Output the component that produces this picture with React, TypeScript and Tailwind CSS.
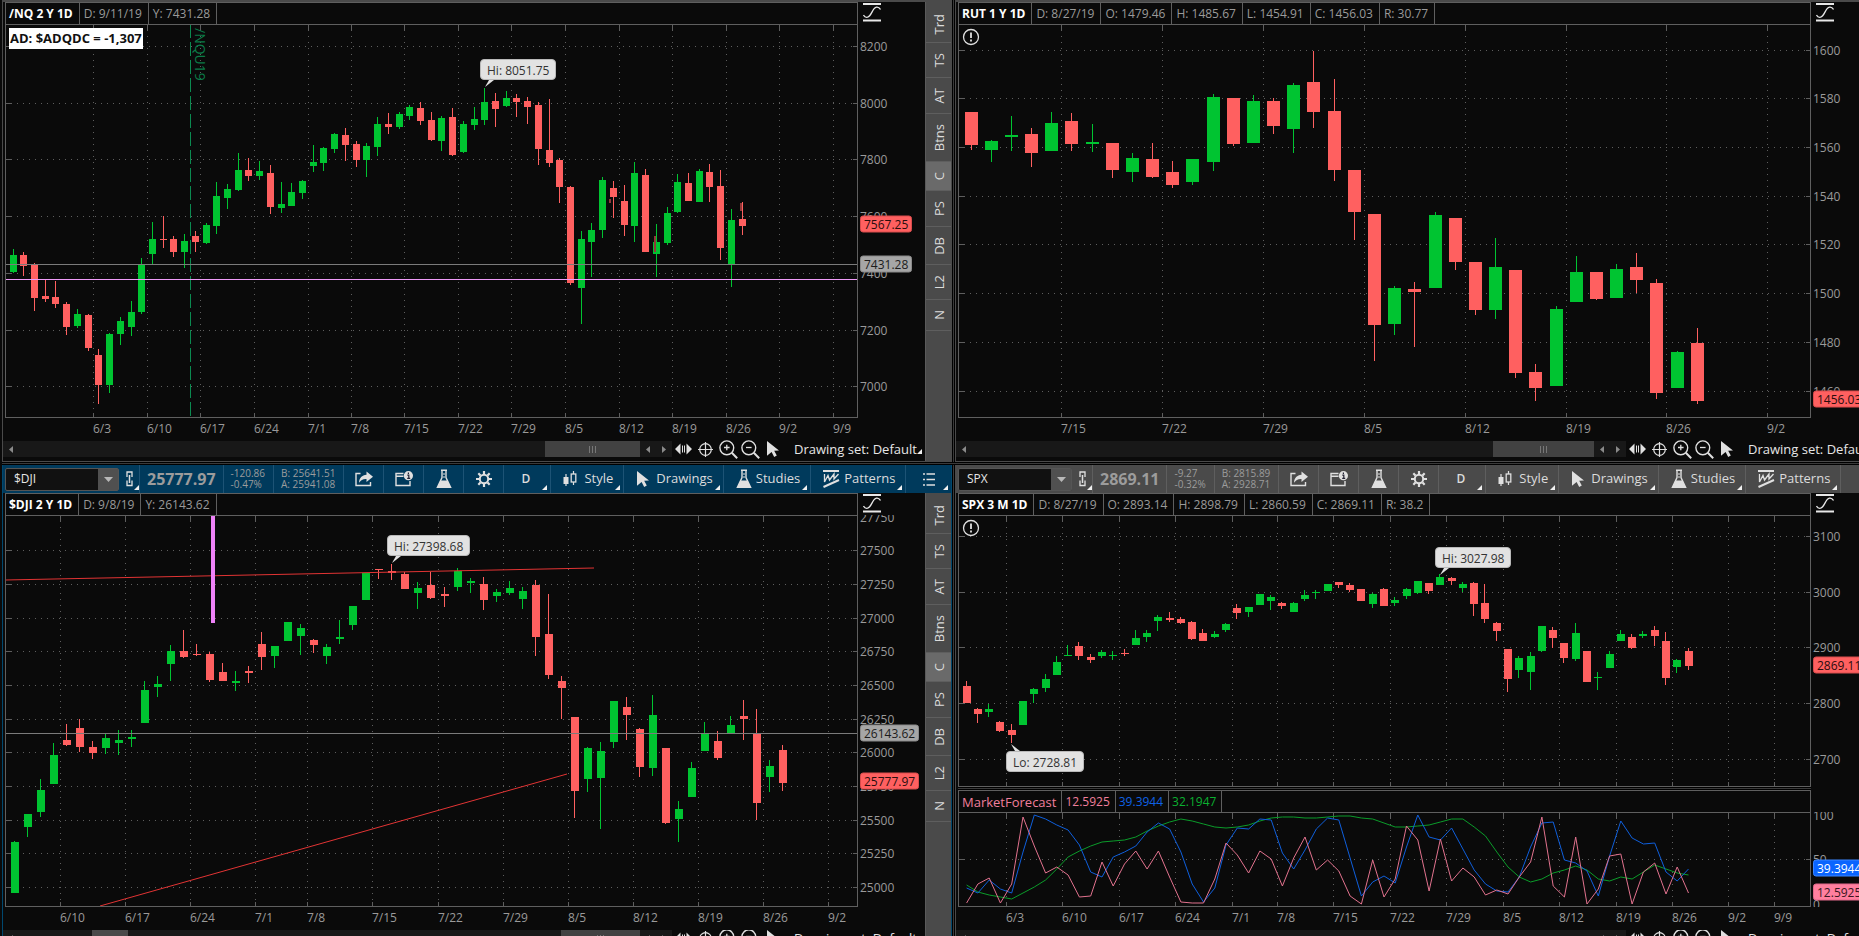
import type { ReactNode } from "react"
import clsx from "clsx"

// direction, high, body top, body bottom, low (chart rows)
type Candle = ["u" | "d", number, number, number, number]
type Tick = [number, string]

interface Series {
  start: number
  step: number
  offset: number
  body: number
  candles: Candle[]
}

const CHART_WIDTH = 853

const nq: Series = {
  start: 8.1,
  step: 10.72,
  offset: 3,
  body: 7,
  candles: [
    ["u", 249, 255, 272, 273], ["d", 252, 255, 266, 276], ["d", 263, 264, 298, 311], ["d", 279, 296, 299, 302],
    ["d", 281, 297, 304, 308], ["d", 302, 304, 327, 335], ["u", 309, 314, 326, 328], ["d", 314, 315, 348, 351],
    ["d", 349, 355, 385, 404], ["u", 333, 334, 385, 393], ["u", 317, 321, 334, 345], ["u", 301, 312, 327, 336],
    ["u", 258, 265, 312, 314], ["u", 222, 239, 254, 264], ["d", 216, 239, 240, 248], ["d", 236, 239, 252, 257],
    ["u", 234, 241, 252, 268], ["d", 231, 236, 242, 252], ["u", 223, 225, 243, 244], ["u", 182, 196, 226, 234],
    ["u", 184, 189, 198, 209], ["u", 153, 170, 190, 191], ["d", 158, 170, 176, 181], ["u", 161, 171, 176, 180],
    ["d", 165, 173, 207, 214], ["u", 182, 204, 208, 213], ["u", 183, 192, 206, 206], ["u", 180, 181, 193, 199],
    ["u", 145, 162, 166, 172], ["u", 147, 148, 163, 171], ["u", 133, 134, 149, 153], ["d", 128, 135, 145, 161],
    ["d", 141, 144, 160, 167], ["u", 143, 146, 160, 177], ["u", 117, 124, 147, 156], ["d", 113, 124, 127, 134],
    ["u", 112, 114, 127, 129], ["u", 105, 107, 116, 120], ["d", 102, 108, 121, 125], ["d", 112, 120, 140, 141],
    ["u", 116, 118, 141, 151], ["d", 108, 117, 155, 156], ["u", 121, 124, 152, 153], ["u", 107, 119, 125, 130],
    ["u", 88, 102, 120, 125], ["d", 93, 101, 109, 127], ["u", 91, 98, 106, 107], ["d", 94, 98, 102, 117],
    ["d", 97, 101, 107, 124], ["d", 102, 105, 149, 165], ["d", 99, 150, 163, 167], ["d", 158, 160, 187, 203],
    ["d", 186, 187, 283, 285], ["u", 231, 239, 288, 324], ["u", 223, 230, 242, 277], ["u", 177, 180, 230, 238],
    ["d", 181, 188, 197, 218], ["d", 185, 201, 225, 236], ["u", 162, 173, 226, 242], ["d", 169, 175, 252, 252],
    ["u", 224, 242, 254, 277], ["u", 207, 213, 243, 245], ["u", 174, 182, 212, 213], ["d", 173, 183, 201, 201],
    ["u", 169, 171, 202, 202], ["d", 164, 172, 187, 202], ["d", 170, 186, 248, 260], ["u", 209, 220, 264, 287],
    ["d", 202, 219, 226, 235],
  ],
}

const rut: Series = {
  start: 13.1,
  step: 20.17,
  offset: 6,
  body: 13,
  candles: [
    ["d", 112, 112, 145, 150], ["u", 140, 141, 150, 162], ["u", 116, 135, 137, 151], ["d", 128, 134, 153, 167],
    ["u", 112, 123, 151, 151], ["d", 113, 121, 144, 151], ["u", 124, 142, 144, 152], ["d", 143, 143, 170, 178],
    ["u", 153, 158, 172, 182], ["d", 143, 159, 177, 178], ["d", 161, 172, 185, 188], ["u", 159, 159, 182, 185],
    ["u", 94, 97, 162, 171], ["d", 98, 98, 144, 146], ["u", 95, 101, 143, 143], ["d", 98, 101, 126, 134],
    ["u", 83, 85, 129, 153], ["d", 51, 82, 112, 128], ["d", 79, 111, 170, 181], ["d", 170, 170, 212, 240],
    ["d", 214, 214, 325, 361], ["u", 286, 288, 324, 335], ["d", 282, 289, 292, 347], ["u", 212, 215, 288, 288],
    ["d", 218, 218, 262, 270], ["d", 262, 262, 310, 315], ["u", 238, 267, 310, 319], ["d", 270, 270, 373, 378],
    ["d", 364, 372, 388, 401], ["u", 306, 309, 386, 386], ["u", 256, 272, 302, 302], ["d", 272, 272, 299, 300],
    ["u", 264, 269, 298, 298], ["d", 253, 267, 280, 293], ["d", 279, 283, 393, 399], ["u", 351, 352, 388, 388],
    ["d", 328, 343, 401, 404],
  ],
}

const dji: Series = {
  start: 9.45,
  step: 13.017,
  offset: 3,
  body: 8,
  candles: [
    ["u", 841, 842, 893, 893], ["u", 814, 814, 827, 837], ["u", 779, 790, 812, 817], ["u", 743, 755, 784, 784],
    ["d", 724, 740, 745, 746], ["d", 719, 728, 747, 752], ["d", 741, 747, 753, 759], ["u", 733, 738, 748, 754],
    ["u", 730, 740, 743, 755], ["u", 730, 737, 739, 747], ["u", 681, 690, 723, 723], ["u", 676, 684, 687, 697],
    ["u", 645, 651, 664, 681], ["d", 630, 651, 657, 658], ["d", 644, 654, 655, 656], ["d", 652, 654, 680, 682],
    ["d", 663, 672, 681, 681], ["u", 671, 681, 683, 691], ["d", 666, 671, 673, 683], ["d", 632, 644, 657, 670],
    ["u", 646, 646, 656, 668], ["u", 622, 622, 641, 641], ["u", 624, 628, 636, 655], ["d", 639, 640, 645, 653],
    ["u", 644, 647, 656, 664], ["u", 620, 637, 639, 644], ["u", 606, 606, 625, 630], ["u", 573, 573, 600, 600],
    ["d", 569, 569, 570, 579], ["d", 564, 571, 573, 580], ["d", 572, 574, 589, 589], ["u", 582, 588, 593, 609],
    ["d", 572, 585, 598, 599], ["d", 587, 594, 596, 607], ["u", 568, 571, 587, 591], ["u", 578, 581, 583, 593],
    ["d", 577, 584, 600, 610], ["u", 589, 592, 596, 602], ["u", 581, 588, 593, 595], ["u", 587, 591, 599, 609],
    ["d", 580, 585, 637, 656], ["d", 594, 634, 675, 679], ["d", 676, 681, 688, 719], ["d", 717, 717, 791, 818],
    ["u", 747, 748, 779, 792], ["u", 742, 751, 778, 829], ["u", 701, 701, 742, 748], ["d", 697, 707, 715, 740],
    ["d", 728, 729, 767, 777], ["u", 695, 715, 768, 776], ["d", 748, 748, 823, 824], ["u", 801, 809, 819, 842],
    ["u", 762, 768, 797, 797], ["u", 722, 734, 751, 751], ["d", 731, 741, 758, 760], ["u", 716, 725, 734, 734],
    ["d", 700, 716, 719, 740], ["d", 709, 734, 803, 820], ["u", 760, 766, 777, 792], ["d", 745, 750, 783, 791],
  ],
}

const spx: Series = {
  start: 8.1,
  step: 11.28,
  offset: 3,
  body: 8,
  candles: [
    ["d", 681, 686, 703, 703], ["d", 708, 709, 714, 723], ["u", 704, 709, 712, 717], ["d", 721, 722, 731, 732],
    ["d", 724, 730, 735, 743], ["u", 701, 701, 725, 725], ["u", 688, 689, 694, 703], ["u", 674, 679, 688, 692],
    ["u", 656, 662, 675, 675], ["u", 645, 655, 656, 656], ["d", 642, 646, 656, 660], ["d", 654, 657, 660, 663],
    ["u", 650, 652, 656, 658], ["u", 651, 655, 656, 660], ["d", 649, 653, 654, 656], ["u", 630, 638, 645, 645],
    ["u", 630, 633, 637, 642], ["u", 615, 617, 621, 631], ["d", 612, 618, 620, 622], ["d", 617, 619, 623, 624],
    ["d", 621, 622, 639, 640], ["d", 629, 633, 641, 641], ["u", 631, 634, 637, 638], ["u", 623, 624, 630, 632],
    ["d", 604, 608, 613, 619], ["u", 607, 607, 612, 617], ["u", 594, 594, 605, 605], ["u", 595, 597, 601, 610],
    ["d", 602, 603, 606, 609], ["u", 602, 603, 612, 612], ["u", 590, 595, 599, 601], ["u", 590, 592, 593, 599],
    ["u", 584, 584, 591, 591], ["d", 582, 582, 585, 588], ["d", 583, 585, 590, 592], ["d", 589, 589, 601, 601],
    ["u", 593, 594, 604, 608], ["d", 588, 589, 606, 606], ["u", 597, 600, 603, 606], ["u", 588, 589, 596, 599],
    ["u", 581, 581, 593, 594], ["d", 583, 583, 591, 594], ["u", 574, 577, 585, 585], ["d", 577, 578, 581, 585],
    ["u", 582, 584, 588, 592], ["d", 582, 583, 604, 616], ["d", 584, 603, 619, 623], ["d", 622, 623, 631, 641],
    ["d", 649, 649, 679, 692], ["u", 656, 658, 670, 678], ["u", 652, 656, 672, 690], ["u", 626, 626, 651, 652],
    ["d", 627, 630, 638, 648], ["d", 643, 643, 658, 663], ["u", 623, 633, 659, 661], ["d", 651, 651, 682, 682],
    ["u", 672, 677, 678, 690], ["u", 651, 654, 668, 668], ["u", 630, 634, 641, 641], ["d", 634, 637, 648, 649],
    ["u", 631, 634, 636, 638], ["d", 626, 630, 636, 646], ["d", 632, 641, 678, 685], ["u", 659, 660, 667, 673],
    ["d", 648, 651, 666, 670],
  ],
}

const momentum = [
  903, 884, 878, 903, 884, 817, 846, 873, 867, 875, 897, 896, 862, 886, 864, 851, 869, 851, 877, 902, 903, 903,
  879, 843, 855, 873, 851, 859, 886, 858, 837, 870, 860, 871, 896, 904, 860, 897, 879, 826, 840, 891, 839, 881,
  868, 877, 895, 890, 894, 877, 862, 817, 886, 897, 837, 904, 889, 856, 854, 904, 872, 863, 894, 867, 893,
]
const nearTerm = [
  888, 893, 880, 889, 893, 852, 815, 819, 825, 830, 845, 872, 877, 857, 852, 846, 832, 823, 829, 852, 884, 902,
  888, 845, 828, 829, 819, 820, 853, 869, 850, 829, 818, 820, 858, 896, 882, 876, 883, 847, 815, 837, 840, 828,
  849, 870, 884, 891, 892, 877, 847, 823, 822, 860, 863, 871, 896, 856, 821, 838, 844, 843, 872, 881, 869,
]
const intermediate = [
  885, 892, 895, 897, 899, 893, 887, 880, 869, 857, 851, 846, 842, 841, 840, 837, 831, 826, 822, 819, 821, 824,
  827, 828, 827, 825, 821, 818, 817, 817, 818, 818, 817, 816, 816, 818, 819, 823, 827, 827, 826, 825, 822, 819,
  819, 827, 836, 852, 867, 877, 882, 879, 873, 870, 866, 870, 879, 881, 877, 879, 872, 865, 869, 873, 875,
]

const nqDates: Tick[] = [
  [88, "6/3"], [142, "6/10"], [195, "6/17"], [249, "6/24"], [303, "7/1"], [346, "7/8"], [399, "7/15"], [453, "7/22"],
  [506, "7/29"], [560, "8/5"], [614, "8/12"], [667, "8/19"], [721, "8/26"], [774, "9/2"], [828, "9/9"],
]
const rutDates: Tick[] = [
  [103, "7/15"], [204, "7/22"], [305, "7/29"], [406, "8/5"], [507, "8/12"], [608, "8/19"], [708, "8/26"], [809, "9/2"],
]
const djiDates: Tick[] = [
  [55, "6/10"], [120, "6/17"], [185, "6/24"], [250, "7/1"], [302, "7/8"], [367, "7/15"], [433, "7/22"],
  [498, "7/29"], [563, "8/5"], [628, "8/12"], [693, "8/19"], [758, "8/26"], [823, "9/2"],
]
const spxDates: Tick[] = [
  [48, "6/3"], [104, "6/10"], [161, "6/17"], [217, "6/24"], [274, "7/1"], [319, "7/8"], [375, "7/15"], [432, "7/22"],
  [488, "7/29"], [545, "8/5"], [601, "8/12"], [658, "8/19"], [714, "8/26"], [770, "9/2"], [816, "9/9"],
]

const nqPrices: Tick[] = [
  [46, "8200"], [103, "8000"], [159, "7800"], [216, "7600"], [273, "7400"], [330, "7200"], [386, "7000"],
]
const rutPrices: Tick[] = [
  [50, "1600"], [98, "1580"], [147, "1560"], [196, "1540"], [244, "1520"], [293, "1500"], [342, "1480"], [391, "1460"],
]
const djiPrices: Tick[] = [
  [517, "27750"], [550, "27500"], [584, "27250"], [618, "27000"], [651, "26750"], [685, "26500"], [719, "26250"],
  [752, "26000"], [786, "25750"], [820, "25500"], [853, "25250"], [887, "25000"],
]
const spxPrices: Tick[] = [
  [536, "3100"], [592, "3000"], [647, "2900"], [703, "2800"], [759, "2700"],
]
const studyLevels: Tick[] = [
  [815, "100"], [859, "50"], [904, "0"],
]

/* ---------- icons ---------- */

function CursorIcon() {
  return (
    <svg width="14" height="17" viewBox="0 0 14 17" fill="#e0e0e0" aria-hidden="true">
      <path d="M1 0 L13 9.5 L8.2 9.8 L10.8 14.6 L8.2 16 L5.6 11.1 L1 14.8 Z" />
    </svg>
  )
}

function FlaskIcon() {
  return (
    <svg width="16" height="20" viewBox="0 0 16 20" aria-hidden="true">
      <path d="M5 1.2h6M6 1.5v7L1.4 18.4h13.2L10 8.500v-7" fill="none" stroke="#e0e0e0" strokeWidth="1.4" />
      <path d="M4.500 11.500h7l3.300 7.200H1.200z" fill="#e0e0e0" />
      <path d="M7 5h2M7 8h2" stroke="#e0e0e0" />
    </svg>
  )
}

function ShareIcon() {
  return (
    <svg width="18" height="16" viewBox="0 0 18 16" aria-hidden="true">
      <path d="M5.500 2.500H1v12h14.500V11" fill="none" stroke="#e0e0e0" strokeWidth="1.4" />
      <path d="M11.500 0.500 L18 5.800 L11.500 11 V8 C8 7.800 5.800 9 4 11.800 C4.200 6.800 7 4 11.500 3.700 Z" fill="#e0e0e0" />
    </svg>
  )
}

function WindowInfoIcon() {
  return (
    <svg width="18" height="16" viewBox="0 0 18 16" aria-hidden="true">
      <path d="M8.500 2.500H1v12h14V10M1 5.300h7.500" fill="none" stroke="#e0e0e0" strokeWidth="1.4" />
      <circle cx="13.400" cy="4.700" r="4.600" fill="#e0e0e0" />
      <path d="M12.300 4.200h1.500v3M12.200 7.300h3M13.400 1.600v1.300" fill="none" stroke="#223" strokeWidth="1.2" />
    </svg>
  )
}

function GearIcon() {
  return (
    <svg width="16" height="16" viewBox="0 0 16 16" fill="none" stroke="#e0e0e0" aria-hidden="true">
      <circle cx="8" cy="8" r="4.200" strokeWidth="2" />
      <path
        d="M8 0v3M8 13v3M0 8h3M13 8h3M2.340 2.340l2.120 2.120M11.540 11.540l2.120 2.120M2.340 13.660l2.120-2.120M11.540 4.460l2.120-2.120"
        strokeWidth="2.200"
      />
    </svg>
  )
}

function CandlesIcon() {
  return (
    <svg width="14" height="16" viewBox="0 0 14 16" aria-hidden="true">
      <path d="M3 3v12" stroke="#e0e0e0" strokeWidth="1.200" />
      <rect x="0.500" y="6" width="5" height="7" fill="#e0e0e0" />
      <path d="M10.500 0v3M10.500 11v3" stroke="#e0e0e0" strokeWidth="1.200" />
      <rect x="8.200" y="3" width="4.600" height="8" fill="none" stroke="#e0e0e0" strokeWidth="1.300" />
    </svg>
  )
}

function PatternsIcon() {
  return (
    <svg width="17" height="18" viewBox="0 0 17 18" fill="none" stroke="#e0e0e0" aria-hidden="true">
      <path d="M0 1h16" strokeWidth="2" />
      <path d="M1.500 4v8L5 5.500 6.500 10 11 4v5l4.500-5" strokeWidth="1.300" />
      <path d="M0.500 17L16 10" strokeWidth="2" />
    </svg>
  )
}

function ListIcon() {
  return (
    <svg width="12" height="13" viewBox="0 0 12 13" stroke="#e0e0e0" aria-hidden="true">
      <path d="M0 1h2M3.500 1h8.500M0 6.500h2M3.500 6.500h8.500M0 12h2M3.500 12h8.500" strokeWidth="1.300" />
    </svg>
  )
}

function LinkIcon() {
  return (
    <svg width="8" height="16" viewBox="0 0 8 16" fill="none" stroke="#e0e0e0" aria-hidden="true">
      <path d="M1 6V1h5v5M1 9.500v5h5v-5" strokeWidth="1.300" />
      <path d="M3.500 4v8" strokeWidth="1.500" />
    </svg>
  )
}

function CurveIcon() {
  return (
    <svg width="18" height="19" viewBox="0 0 18 19" fill="none" stroke="#e8e8e8" aria-hidden="true">
      <path d="M0 1h18M0 17.500h18" strokeWidth="2" />
      <path d="M0.500 12c1 2 2.500 2.500 4 2.200C9 13 9 5 13.500 4.200c1.800-.3 3 .6 4 2.300" strokeWidth="1.300" />
    </svg>
  )
}

function AlertIcon() {
  return (
    <svg width="18" height="18" viewBox="0 0 18 18" aria-hidden="true">
      <circle cx="9" cy="9" r="7.500" fill="none" stroke="#e0e0e0" strokeWidth="1.300" />
      <path d="M9 4.500v5.500M9 11.500v2" stroke="#e0e0e0" strokeWidth="1.800" />
    </svg>
  )
}

function PanIcon() {
  return (
    <svg width="17" height="12" viewBox="0 0 17 12" aria-hidden="true">
      <path d="M5.500 0.500v11L0 6zM11.500 0.500v11L17 6z" fill="#e0e0e0" />
      <path d="M7.500 2.500v7M9.500 2.500v7" stroke="#e0e0e0" />
    </svg>
  )
}

function CrosshairIcon() {
  return (
    <svg width="15" height="15" viewBox="0 0 15 15" fill="none" stroke="#e0e0e0" strokeWidth="1.200" aria-hidden="true">
      <circle cx="7.500" cy="7.500" r="5.800" />
      <path d="M7.500 0v15M0 7.500h15" />
    </svg>
  )
}

function ZoomIcon({ plus }: { plus?: boolean }) {
  return (
    <svg width="19" height="19" viewBox="0 0 19 19" fill="none" stroke="#e0e0e0" aria-hidden="true">
      <circle cx="7.800" cy="7.800" r="6.900" strokeWidth="1.400" />
      <path d="M12.800 12.800l5.400 5.400" strokeWidth="2" />
      <path d={plus ? "M5 7.500h5.600M7.800 4.700v5.600" : "M5 7.500h5.600"} strokeWidth="1.300" />
    </svg>
  )
}

function Corner() {
  return (
    <svg width="5" height="5" viewBox="0 0 5 5" className="mb-[3px] shrink-0 self-end" aria-hidden="true">
      <path d="M5 0v5H0z" fill="#f0f0f0" />
    </svg>
  )
}

/* ---------- chart pieces ---------- */

function Candles({ series }: { series: Series }) {
  return (
    <g>
      {series.candles.map(([dir, high, top, bottom, low], i) => {
        const x = Math.floor(series.start + series.step * i)
        const fill = dir === "u" ? "#00c431" : "#ff6060"
        return (
          <g key={i} fill={fill}>
            <rect x={x} y={high} width="1" height={Math.max(low - high, 1)} />
            <rect x={x - series.offset} y={top} width={series.body} height={bottom - top} />
          </g>
        )
      })}
    </g>
  )
}

function studyPoints(values: number[]) {
  return values.map((y, i) => `${(8.6 + 11.28 * i).toFixed(1)},${y}`).join(" ")
}

interface PlotProps {
  top: number
  height: number
  dates: Tick[]
  prices: Tick[]
  tags: { y: number; text: string; className: string }[]
  axisClass: string
  grow: string
  children?: ReactNode
  overlay?: ReactNode
}

function Plot({ top, height, dates, prices, tags, axisClass, grow, children, overlay }: PlotProps) {
  const bottom = top + height
  const rows = prices.filter(([y]) => y > top + 5 && y < bottom - 5)
  const pct = (y: number) => `${((y + 1 - top) / height) * 100}%`
  return (
    <div className={clsx("flex min-h-0 basis-0", grow)}>
      <div className="relative min-w-0 flex-1">
        <svg
          viewBox={`0 ${top} ${CHART_WIDTH} ${height}`}
          preserveAspectRatio="none"
          className="absolute inset-0 h-full w-full"
          shapeRendering="crispEdges"
        >
          <g stroke="#5e5e5e" strokeWidth="1">
            {rows.map(([y]) => (
              <g key={y}>
                <path d={`M6 ${y + 0.5}H${CHART_WIDTH}`} strokeDasharray="1 5" />
                <path d={`M0 ${y + 0.5}h6M${CHART_WIDTH - 5} ${y + 0.5}h5`} />
              </g>
            ))}
            {dates.map(([x]) => (
              <g key={x}>
                <path d={`M${x + 0.5} ${top + 6}V${bottom}`} strokeDasharray="1 5" />
                <path d={`M${x + 0.5} ${top}v6M${x + 0.5} ${bottom - 5}v5`} />
              </g>
            ))}
          </g>
          {children}
          <rect
            x="0.5"
            y={top + 0.5}
            width={CHART_WIDTH - 1}
            height={height - 1}
            fill="none"
            stroke="#5f5f5f"
          />
        </svg>
        {overlay}
      </div>
      <div className={clsx("relative overflow-hidden text-[#9a9a9a]", axisClass)}>
        {prices.map(([y, text]) => (
          <span key={text} className="absolute left-[2px] -translate-y-1/2 leading-4" style={{ top: pct(y) }}>
            {text}
          </span>
        ))}
        {tags.map((tag) => (
          <span
            key={tag.text}
            className={clsx(
              "absolute left-[2px] h-[17px] -translate-y-1/2 rounded-[3px] border px-[3px] leading-[15px]",
              tag.className
            )}
            style={{ top: pct(tag.y) }}
          >
            {tag.text}
          </span>
        ))}
      </div>
    </div>
  )
}

const redTag = "border-[#d84c4c] bg-[#ff6060] text-[#2a0d0d]"
const greyTag = "border-[#8a8a8a] bg-[#a6a6a6] text-[#1c1c1c]"

interface CalloutProps {
  left: number
  top: number
  plotTop: number
  plotHeight: number
  low?: boolean
  children: ReactNode
}

function Callout({ left, top, plotTop, plotHeight, low, children }: CalloutProps) {
  return (
    <div
      className="absolute flex flex-col"
      style={{ left: `${(left / CHART_WIDTH) * 100}%`, top: `${((top - plotTop) / plotHeight) * 100}%` }}
    >
      {low && (
        <svg width="9" height="7" viewBox="0 0 9 7" className="ml-[5px]" aria-hidden="true">
          <path d="M0 0L4 7h5z" fill="#e2e2e2" />
        </svg>
      )}
      <div className="h-[21px] rounded-[4px] border border-[#b9b9b9] bg-[#e2e2e2] px-[6px] leading-[22px] whitespace-nowrap text-[#333]">
        {children}
      </div>
      {!low && (
        <svg width="9" height="7" viewBox="0 0 9 7" className="ml-[5px]" aria-hidden="true">
          <path d="M0 7L4 0h5z" fill="#e2e2e2" />
        </svg>
      )}
    </div>
  )
}

function Readout({ title, values, axisClass }: { title: string; values: string[]; axisClass: string }) {
  return (
    <div className="flex h-[22px] shrink-0">
      <div className="flex min-w-0 flex-1 border-x border-t border-[#5f5f5f] leading-[22px] whitespace-nowrap">
        <span className="border-r border-[#5f5f5f] pr-[6px] pl-[3px] font-bold text-white">{title}</span>
        {values.map((v) => (
          <span key={v} className="border-r border-[#5f5f5f] pr-[6px] pl-1 text-[#9a9a9a]">
            {v}
          </span>
        ))}
      </div>
      <div className={clsx("pt-[1px] pl-[5px]", axisClass)}>
        <button type="button" aria-label="Axis scale" className="block">
          <CurveIcon />
        </button>
      </div>
    </div>
  )
}

function DateAxis({ dates, axisClass }: { dates: Tick[]; axisClass: string }) {
  return (
    <div className="flex h-[23px] shrink-0 text-[#9a9a9a]">
      <div className="relative flex-1">
        {dates.map(([x, text]) => (
          <span key={text} className="absolute leading-[21px]" style={{ left: `${(x / CHART_WIDTH) * 100}%` }}>
            {text}
          </span>
        ))}
      </div>
      <div className={axisClass} />
    </div>
  )
}

function ScrollArrow({ right }: { right?: boolean }) {
  return (
    <button type="button" aria-label={right ? "Scroll right" : "Scroll left"} className="flex w-4 items-center justify-center">
      <svg width="4" height="7" viewBox="0 0 4 7" aria-hidden="true">
        <path d={right ? "M0 0l4 3.500L0 7z" : "M4 0L0 3.500 4 7z"} fill="#8a8a8a" />
      </svg>
    </button>
  )
}

function ScrollRow({ thumb, marker, className }: { thumb?: string; marker?: boolean; className?: string }) {
  return (
    <div className={clsx("flex h-4 shrink-0 items-center", className)}>
      <div className="flex h-4 min-w-0 flex-1 bg-[#181818]">
        <ScrollArrow />
        {marker && <div className="ml-[73px] w-9 bg-[#4a4a4a]" />}
        <div className="flex-1" />
        {thumb && (
          <div className={clsx("flex items-center justify-center gap-[2px] bg-[#424242]", thumb)}>
            <i className="h-[7px] w-px bg-[#777]" />
            <i className="h-[7px] w-px bg-[#777]" />
            <i className="h-[7px] w-px bg-[#777]" />
          </div>
        )}
        <ScrollArrow />
        <ScrollArrow right />
      </div>
      <div className="flex w-[253px] shrink-0 items-center pl-[3px]">
        <button type="button" aria-label="Pan" className="mr-[6px]"><PanIcon /></button>
        <button type="button" aria-label="Crosshair" className="mr-[6px]"><CrosshairIcon /></button>
        <button type="button" aria-label="Zoom in" className="mr-[3px]"><ZoomIcon plus /></button>
        <button type="button" aria-label="Zoom out" className="mr-[6px]"><ZoomIcon /></button>
        <button type="button" aria-label="Pointer" className="mr-[14px]"><CursorIcon /></button>
        <button type="button" className="flex flex-1 items-center justify-between pr-[3px] text-[13px] leading-4 whitespace-nowrap text-[#e6e6e6]">
          Drawing set: Default
          <Corner />
        </button>
      </div>
    </div>
  )
}

const gadgets = [
  { name: "Trd", size: "h-[41px] pt-1" },
  { name: "TS", size: "h-[35px]" },
  { name: "AT", size: "h-[36px]" },
  { name: "Btns", size: "h-[48px]" },
  { name: "C", size: "h-[29px] bg-[#6a6a6a]" },
  { name: "PS", size: "h-[36px]" },
  { name: "DB", size: "h-[38px]" },
  { name: "L2", size: "h-[35px]" },
  { name: "N", size: "h-[31px]" },
]

function Gadgets() {
  return (
    <nav className="flex w-[26px] shrink-0 flex-col border-l border-[#5a5a5a] bg-[#4a4a4a]">
      {gadgets.map(({ name, size }) => (
        <button
          key={name}
          type="button"
          className={clsx(
            "flex shrink-0 items-center justify-center border-b border-[#5e5e5e] text-[13px] leading-[18px] text-[#dcdcdc]",
            size
          )}
        >
          <span className="rotate-180 [writing-mode:vertical-rl]">{name}</span>
        </button>
      ))}
    </nav>
  )
}

interface ToolbarProps {
  symbol: string
  last: string
  change: [string, string]
  quote: [string, string]
  active?: boolean
}

function Toolbar({ symbol, last, change, quote, active }: ToolbarProps) {
  const line = active ? "border-[#1d5375]" : "border-[#5e5e5e]"
  const icon = clsx("flex w-10 shrink-0 items-center justify-center border-r", line)
  const menu = clsx("flex shrink-0 items-center border-r pr-[3px] pl-3 text-[13px] text-[#dcdcdc]", line)
  return (
    <div className={clsx("flex h-7 shrink-0 overflow-hidden pl-[2px]", active ? "bg-[#003a5c]" : "bg-[#4a4a4a]")}>
      <div className={clsx("flex shrink-0 items-center border-r", line)}>
        <div className="flex h-[23px] w-[114px] rounded-[2px] border border-[#555] bg-[#111]">
          <input
            aria-label="Symbol"
            defaultValue={symbol}
            className="min-w-0 flex-1 bg-transparent pl-2 text-[12px] text-[#e6e6e6] outline-none"
          />
          <button type="button" aria-label="Symbol list" className="flex w-5 items-center justify-center bg-[#505050]">
            <svg width="9" height="5" viewBox="0 0 9 5" aria-hidden="true">
              <path d="M0 0h9L4.500 5z" fill="#b8b8b8" />
            </svg>
          </button>
        </div>
        <button type="button" aria-label="Link color" className="flex h-7 w-5 items-center pl-[7px]">
          <LinkIcon />
          <Corner />
        </button>
      </div>
      <div className={clsx("flex shrink-0 items-center border-r px-[7px] text-[16px] font-bold text-[#9c9c9c]", line)}>
        {last}
      </div>
      {[change, quote].map(([a, b]) => (
        <div
          key={a}
          className={clsx(
            "flex shrink-0 flex-col justify-center border-r pr-2 pl-[7px] text-[10px] leading-[11px] whitespace-nowrap text-[#9c9c9c]",
            line
          )}
        >
          <span>{a}</span>
          <span>{b}</span>
        </div>
      ))}
      <button type="button" aria-label="Share" className={icon}><ShareIcon /></button>
      <button type="button" aria-label="Company info" className={icon}><WindowInfoIcon /></button>
      <button type="button" aria-label="Edit studies" className={icon}><FlaskIcon /></button>
      <button type="button" aria-label="Settings" className={icon}><GearIcon /></button>
      <button type="button" className={clsx("flex w-[47px] shrink-0 items-center justify-end border-r pr-[3px] text-[12px] font-semibold text-[#dcdcdc]", line)}>
        <span className="mr-3">D</span>
        <Corner />
      </button>
      <button type="button" className={menu}>
        <CandlesIcon />
        <span className="mr-[2px] ml-[7px]">Style</span>
        <Corner />
      </button>
      <button type="button" className={menu}>
        <CursorIcon />
        <span className="mr-[2px] ml-[6px]">Drawings</span>
        <Corner />
      </button>
      <button type="button" className={menu}>
        <FlaskIcon />
        <span className="mr-[2px] ml-1">Studies</span>
        <Corner />
      </button>
      <button type="button" className={menu}>
        <PatternsIcon />
        <span className="mr-[2px] ml-1">Patterns</span>
        <Corner />
      </button>
      {active && (
        <button type="button" aria-label="More" className="flex flex-1 items-center justify-end pr-[3px]">
          <span className="mr-2"><ListIcon /></span>
          <Corner />
        </button>
      )}
    </div>
  )
}

function Divider({ vertical }: { vertical?: boolean }) {
  return (
    <div
      className={clsx(
        "border-black bg-[#3a3a3a]",
        vertical ? "border-x" : "col-span-3 border-y"
      )}
    />
  )
}

const wideAxis = "w-[67px] shrink-0"
const narrowAxis = "w-12 shrink-0"

export default function App() {
  return (
    <main className="grid h-screen w-full grid-cols-[minmax(0,950fr)_3px_minmax(0,904fr)] grid-rows-[minmax(0,462fr)_3px_minmax(0,471fr)] overflow-hidden bg-[#0a0a0a] pl-[2px] font-['Open_Sans',sans-serif] text-[12px]">
      {/* NQ futures */}
      <section aria-label="/NQ" className="flex min-w-0 flex-col border-x border-b border-[#4a4a4a]">
        <div className="h-[2px] shrink-0 bg-[#4a4a4a]" />
        <div className="flex min-h-0 flex-1">
          <div className="flex min-w-0 flex-1 flex-col pb-1">
            <div className="flex min-h-0 flex-1 flex-col pl-[2px]">
              <Readout title="/NQ 2 Y 1D" values={["D: 9/11/19", "Y: 7431.28"]} axisClass={wideAxis} />
              <Plot
                top={24}
                height={394}
                dates={nqDates}
                prices={nqPrices}
                axisClass={wideAxis}
                grow="grow"
                tags={[
                  { y: 223, text: "7567.25", className: redTag },
                  { y: 263, text: "7431.28", className: greyTag },
                ]}
                overlay={
                  <>
                    <div className="absolute top-1 left-1 h-[21px] bg-white px-[1px] text-[13px] leading-[21px] font-bold whitespace-nowrap text-[#111]">
                      AD: $ADQDC = -1,307
                    </div>
                    <div className="absolute top-1 left-[22%] text-[14px] leading-[14px] text-[#0b7a47] [writing-mode:vertical-rl]">
                      /NQU19
                    </div>
                    <Callout left={475} top={59} plotTop={24} plotHeight={394}>Hi: 8051.75</Callout>
                  </>
                }
              >
                <path d="M185.500 24V417" stroke="#0b8a50" strokeDasharray="14 4" />
                <Candles series={nq} />
                <g fill="#8f3838">
                  <rect x="604" y="199" width="2" height="4" />
                  <rect x="649" y="236" width="2" height="16" />
                  <rect x="735" y="203" width="2" height="8" />
                </g>
                <path d="M0 264.500H853" stroke="#7b7b7b" />
                <path d="M0 279.500H853" stroke="#ef9cf8" />
              </Plot>
              <DateAxis dates={nqDates} axisClass={wideAxis} />
            </div>
            <ScrollRow thumb="w-[95px]" />
          </div>
          <Gadgets />
        </div>
      </section>
      <Divider vertical />
      {/* Russell 2000 */}
      <section aria-label="RUT" className="flex min-w-0 flex-col overflow-hidden border-b border-l border-[#4a4a4a]">
        <div className="h-[2px] shrink-0 bg-[#4a4a4a]" />
        <div className="flex min-h-0 flex-1 flex-col pb-1">
          <div className="flex min-h-0 flex-1 flex-col pl-[2px]">
            <Readout
              title="RUT 1 Y 1D"
              values={["D: 8/27/19", "O: 1479.46", "H: 1485.67", "L: 1454.91", "C: 1456.03", "R: 30.77"]}
              axisClass={narrowAxis}
            />
            <Plot
              top={24}
              height={394}
              dates={rutDates}
              prices={rutPrices}
              axisClass={narrowAxis}
              grow="grow"
              tags={[{ y: 398, text: "1456.03", className: redTag }]}
              overlay={<div className="absolute top-1 left-1"><AlertIcon /></div>}
            >
              <Candles series={rut} />
            </Plot>
            <DateAxis dates={rutDates} axisClass={narrowAxis} />
          </div>
          <ScrollRow thumb="w-[101px]" className="-mr-5" />
        </div>
      </section>
      <Divider />
      {/* Dow, the selected cell */}
      <section aria-label="$DJI" className="flex min-w-0 flex-col overflow-hidden border-x border-[#00486f]">
        <Toolbar
          symbol="$DJI"
          last="25777.97"
          change={["-120.86", "-0.47%"]}
          quote={["B: 25641.51", "A: 25941.08"]}
          active
        />
        <div className="flex min-h-0 flex-1">
          <div className="flex min-w-0 flex-1 flex-col">
            <div className="flex min-h-0 flex-1 flex-col pl-[2px]">
              <Readout title="$DJI 2 Y 1D" values={["D: 9/8/19", "Y: 26143.62"]} axisClass={wideAxis} />
              <Plot
                top={515}
                height={392}
                dates={djiDates}
                prices={djiPrices}
                axisClass={wideAxis}
                grow="grow"
                tags={[
                  { y: 732, text: "26143.62", className: greyTag },
                  { y: 780, text: "25777.97", className: redTag },
                ]}
                overlay={<Callout left={382} top={535} plotTop={515} plotHeight={392}>Hi: 27398.68</Callout>}
              >
                <Candles series={dji} />
                <path d="M0 733.500H853" stroke="#7b7b7b" />
                <g stroke="#e23434" shapeRendering="auto">
                  <path d="M0 580L589 568" />
                  <path d="M95 906L562 774" />
                </g>
                <rect x="206" y="516" width="4" height="107" fill="#ee82f8" />
              </Plot>
              <DateAxis dates={djiDates} axisClass={wideAxis} />
            </div>
            <div className="h-[6px] shrink-0 overflow-hidden">
              <ScrollRow thumb="w-[79px]" marker />
            </div>
          </div>
          <Gadgets />
        </div>
      </section>
      <Divider vertical />
      {/* S&P 500 with the forecast study */}
      <section aria-label="SPX" className="flex min-w-0 flex-col overflow-hidden border-l border-[#4a4a4a]">
        <Toolbar
          symbol="SPX"
          last="2869.11"
          change={["-9.27", "-0.32%"]}
          quote={["B: 2815.89", "A: 2928.71"]}
        />
        <div className="flex min-h-0 flex-1 flex-col pl-[2px]">
          <Readout
            title="SPX 3 M 1D"
            values={["D: 8/27/19", "O: 2893.14", "H: 2898.79", "L: 2860.59", "C: 2869.11", "R: 38.2"]}
            axisClass={narrowAxis}
          />
          <Plot
            top={515}
            height={272}
            dates={spxDates}
            prices={spxPrices}
            axisClass={narrowAxis}
            grow="grow-[272]"
            tags={[{ y: 664, text: "2869.11", className: redTag }]}
            overlay={
              <>
                <div className="absolute top-1 left-1"><AlertIcon /></div>
                <Callout left={477} top={547} plotTop={515} plotHeight={272}>Hi: 3027.98</Callout>
                <Callout left={48} top={744} plotTop={515} plotHeight={272} low>Lo: 2728.81</Callout>
              </>
            }
          >
            <Candles series={spx} />
          </Plot>
          <div className="mr-12 h-[3px] shrink-0 border-y border-black bg-[#3a3a3a]" />
          <div className="mr-12 flex h-[22px] shrink-0 border-x border-t border-[#5f5f5f] leading-[22px]">
            <span className="border-r border-[#5f5f5f] pr-[5px] pl-[3px] text-[13px] text-[#f07f9c]">MarketForecast</span>
            <span className="border-r border-[#5f5f5f] pr-[5px] pl-[3px] text-[#f07f9c]">12.5925</span>
            <span className="border-r border-[#5f5f5f] pr-[5px] pl-[3px] text-[#0f62e6]">39.3944</span>
            <span className="border-r border-[#5f5f5f] pr-[5px] pl-[3px] text-[#0bb030]">32.1947</span>
          </div>
          <Plot
            top={812}
            height={95}
            dates={spxDates}
            prices={studyLevels}
            axisClass={narrowAxis}
            grow="grow-[95]"
            tags={[
              { y: 867, text: "39.3944", className: "border-[#3d86ff] bg-[#0a64ff] text-white" },
              { y: 891, text: "12.5925", className: "border-[#e0698a] bg-[#ff7f9f] text-[#3a1620]" },
            ]}
          >
            <g fill="none" shapeRendering="auto">
              <polyline points={studyPoints(intermediate)} stroke="#0a9c2a" />
              <polyline points={studyPoints(nearTerm)} stroke="#0f5fdc" />
              <polyline points={studyPoints(momentum)} stroke="#e2728e" />
            </g>
          </Plot>
          <DateAxis dates={spxDates} axisClass={narrowAxis} />
        </div>
        <div className="-mr-5 h-[6px] shrink-0 overflow-hidden">
          <ScrollRow />
        </div>
      </section>
    </main>
  )
}
